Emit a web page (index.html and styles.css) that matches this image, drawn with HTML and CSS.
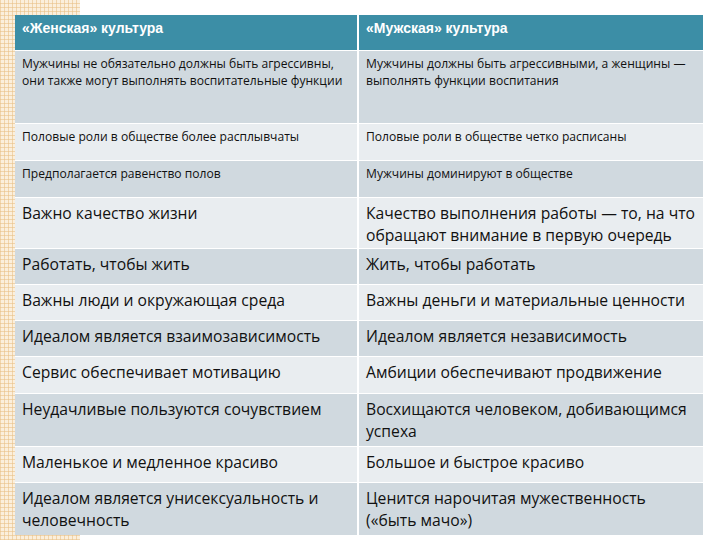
FILE: index.html
```html
<!DOCTYPE html>
<html lang="ru">
<head>
<meta charset="utf-8">
<title>Женская и мужская культура</title>
<link rel="stylesheet" href="styles.css">
</head>
<body>
<div class="page">
  <div class="table">
    <div class="cell head h-head">«Женская» культура</div>
    <div class="cell head h-head">«Мужская» культура</div>

    <div class="cell dark small h-72">Мужчины не обязательно должны быть агрессивны, они также могут выполнять воспитательные функции</div>
    <div class="cell dark small h-72">Мужчины должны быть агрессивными, а женщины — выполнять функции воспитания</div>

    <div class="cell light small h-36">Половые роли в обществе более расплывчаты</div>
    <div class="cell light small h-36">Половые роли в обществе четко расписаны</div>

    <div class="cell dark small h-36">Предполагается равенство полов</div>
    <div class="cell dark small h-36">Мужчины доминируют в обществе</div>

    <div class="cell light large h-50">Важно качество жизни</div>
    <div class="cell light large h-50">Качество выполнения работы — то, на что обращают внимание в первую очередь</div>

    <div class="cell dark large h-35">Работать, чтобы жить</div>
    <div class="cell dark large h-35">Жить, чтобы работать</div>

    <div class="cell light large h-35">Важны люди и окружающая среда</div>
    <div class="cell light large h-35">Важны деньги и материальные ценности</div>

    <div class="cell dark large h-35">Идеалом является взаимозависимость</div>
    <div class="cell dark large h-35">Идеалом является независимость</div>

    <div class="cell light large h-36">Сервис обеспечивает мотивацию</div>
    <div class="cell light large h-36">Амбиции обеспечивают продвижение</div>

    <div class="cell dark large h-52">Неудачливые пользуются сочувствием</div>
    <div class="cell dark large h-52">Восхищаются человеком, добивающимся успеха</div>

    <div class="cell light large h-35">Маленькое и медленное красиво</div>
    <div class="cell light large h-35">Большое и быстрое красиво</div>

    <div class="cell dark large h-52">Идеалом является унисексуальность и человечность</div>
    <div class="cell dark large h-52">Ценится нарочитая мужественность («быть мачо»)</div>
  </div>
</div>
</body>
</html>
```

FILE: styles.css
```css
html, body {
  margin: 0;
  padding: 0;
}

body {
  width: 720px;
  height: 540px;
  overflow: hidden;
  background-color: #ffffff;
  background-image:
    repeating-linear-gradient(90deg, rgba(232, 190, 130, 0.55) 0 1px, transparent 1px 4px),
    repeating-linear-gradient(0deg, rgba(232, 190, 130, 0.55) 0 1px, transparent 1px 4px),
    linear-gradient(#fbefdc, #fbefdc);
  background-size: 80px 100%;
  background-repeat: no-repeat;
}

.page {
  padding: 15px 17px 0 15px;
}

.table {
  display: grid;
  grid-template-columns: 342px 344px;
  column-gap: 2px;
  row-gap: 1px;
  background: #ffffff;
  width: 688px;
}

.cell {
  box-sizing: border-box;
  padding: 4px 7px 0 7px;
  color: #111111;
}

.head {
  background: #3c8ea6;
  color: #ffffff;
  font-family: "Liberation Sans", Arial, sans-serif;
  font-weight: bold;
  font-size: 14px;
  line-height: 18px;
  padding-top: 4px;
}

.dark {
  background: #d0d9df;
}

.light {
  background: #e9edf0;
}

.small {
  font-family: "Open Sans", "Noto Sans", sans-serif;
  font-size: 12.1px;
  line-height: 17px;
  padding-top: 4px;
}

.large {
  font-family: "Open Sans", "Noto Sans", sans-serif;
  font-size: 15.7px;
  line-height: 22px;
  padding-top: 4px;
}

.h-head { height: 35px; }
.h-72 { height: 72px; }
.h-36 { height: 36px; }
.h-35 { height: 35px; }
.h-50 { height: 50px; }
.h-52 { height: 52px; }
```
